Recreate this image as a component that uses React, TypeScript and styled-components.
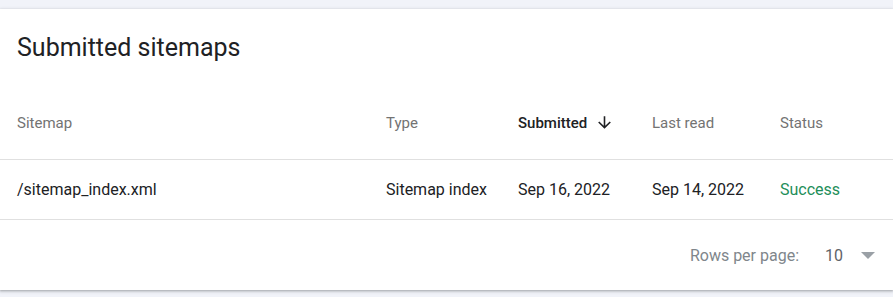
import React from "react";
import styled, { createGlobalStyle } from "styled-components";

const GlobalStyle = createGlobalStyle`
  html, body {
    margin: 0;
    padding: 0;
    background: #f1f3f9;
    font-family: Roboto, "Liberation Sans", Arial, sans-serif;
  }
`;

const Page = styled.div`
  padding: 9px 0 7px;
`;

const Card = styled.section`
  background: #fff;
  box-shadow: 0 1px 2px rgba(60, 64, 67, 0.3), 0 1px 3px 1px rgba(60, 64, 67, 0.15);
`;

const Title = styled.h2`
  margin: 0;
  padding: 24px 17px 25px;
  font-size: 25px;
  line-height: 30px;
  font-weight: 400;
  color: #202124;
`;

const Row = styled.div<{ $height: number; $line?: boolean }>`
  display: grid;
  grid-template-columns: 369px 132px 134px 128px 1fr;
  align-items: center;
  padding-left: 17px;
  height: ${(p) => p.$height}px;
  border-bottom: ${(p) => (p.$line ? "1px solid #e0e0e0" : "none")};
`;

const HeadCell = styled.div<{ $active?: boolean }>`
  display: flex;
  align-items: center;
  gap: 8px;
  padding-bottom: 2px;
  font-size: 15px;
  font-weight: ${(p) => (p.$active ? 500 : 400)};
  color: ${(p) => (p.$active ? "#202124" : "#737373")};
`;

const Cell = styled.div<{ $status?: boolean }>`
  font-size: 16px;
  color: ${(p) => (p.$status ? "#1e8e5a" : "#202124")};
`;

const Footer = styled.div`
  display: flex;
  align-items: center;
  justify-content: flex-end;
  height: 70px;
  padding-right: 18px;
  font-size: 16px;
`;

const FooterLabel = styled.span`
  color: #80868b;
`;

const PageSize = styled.span`
  color: #5f6368;
  margin-left: 26px;
  margin-right: 18px;
`;

const Caret = styled.span`
  width: 0;
  height: 0;
  border-left: 7px solid transparent;
  border-right: 7px solid transparent;
  border-top: 7px solid #9aa0a6;
`;

const ArrowDown = () => (
  <svg width="19" height="19" viewBox="0 0 24 24" fill="#202124">
    <path d="M20 12l-1.41-1.41L13 16.17V4h-2v12.17l-5.58-5.59L4 12l8 8 8-8z" />
  </svg>
);

export default function App() {
  return (
    <Page>
      <GlobalStyle />
      <Card>
        <Title>Submitted sitemaps</Title>
        <Row $height={71} $line>
          <HeadCell>Sitemap</HeadCell>
          <HeadCell>Type</HeadCell>
          <HeadCell $active>
            Submitted <ArrowDown />
          </HeadCell>
          <HeadCell>Last read</HeadCell>
          <HeadCell>Status</HeadCell>
        </Row>
        <Row $height={59} $line>
          <Cell>/sitemap_index.xml</Cell>
          <Cell>Sitemap index</Cell>
          <Cell>Sep 16, 2022</Cell>
          <Cell>Sep 14, 2022</Cell>
          <Cell $status>Success</Cell>
        </Row>
        <Footer>
          <FooterLabel>Rows per page:</FooterLabel>
          <PageSize>10</PageSize>
          <Caret />
        </Footer>
      </Card>
    </Page>
  );
}
